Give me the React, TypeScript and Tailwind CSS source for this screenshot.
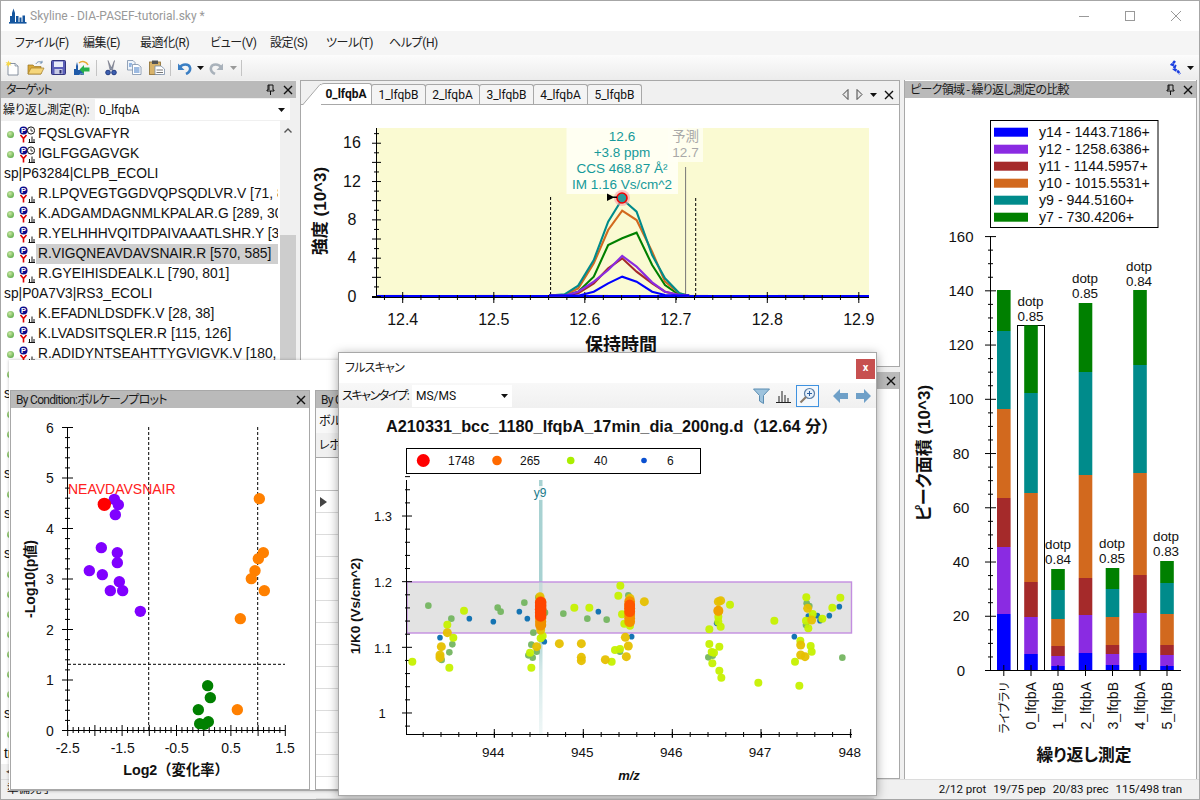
import React from "react";

const UI = "font-['Roboto','Noto_Sans_CJK_JP',sans-serif] [font-feature-settings:'palt']";
const AR = "font-['Liberation_Sans','Noto_Sans_CJK_JP',sans-serif]";
const NOPALT = "[font-feature-settings:normal]";

const range = (a: number, b: number, s: number) => {
  const r: number[] = [];
  for (let v = a; v <= b + 1e-6; v += s) r.push(v);
  return r;
};

function CloseX({ className = "" }: { className?: string }) {
  return (
    <svg width="10" height="10" viewBox="0 0 10 10" className={className}>
      <path d="M1 1L9 9M9 1L1 9" stroke="#111" strokeWidth="1.4" />
    </svg>
  );
}
function Pin() {
  return (
    <svg width="9" height="11" viewBox="0 0 9 11">
      <path d="M2 1H7V6H8V7H1V6H2ZM3 1V6M4.5 7V11" stroke="#111" fill="none" strokeWidth="1" />
    </svg>
  );
}
function PanelTitle({ text, pin, className = "tracking-[-0.7px]" }: { text: string; pin?: boolean; className?: string }) {
  return (
    <div className={`h-[17px] shrink-0 bg-[#bababa] flex items-center pl-[5px] pr-[3px] text-[12px] text-[#1a1a1a] ${className}`}>
      <span className="flex-1 whitespace-nowrap overflow-hidden">{text}</span>
      {pin && <span className="mr-[8px] flex"><Pin /></span>}
      <CloseX />
    </div>
  );
}

const tb = {
  New: (
    <svg width="14" height="16" viewBox="0 0 14 16">
      <path d="M3 3.5H10L13 6V15H3Z" fill="#fff" stroke="#6d7a8c" strokeWidth="0.8" />
      <path d="M10 3.5V6H13" fill="#dfe6ee" stroke="#6d7a8c" strokeWidth="0.6" />
      <path d="M3.5 0.5L4.3 2.6L6.5 2L5 3.8L6.5 5.6L4.3 5L3.5 7L2.6 5L0.5 5.6L2 3.8L0.5 2L2.6 2.6Z" fill="#f6d84a" />
    </svg>
  ),
  Open: (
    <svg width="18" height="16" viewBox="0 0 18 16">
      <path d="M1 5H6L7.5 6.5H14V14H1Z" fill="#d9a93a" stroke="#9a7420" strokeWidth="0.7" />
      <path d="M1 14L4 8H17L14 14Z" fill="#f5d67c" stroke="#a47d26" strokeWidth="0.7" />
      <path d="M9 4C10 1.5 13 1 15 2.5M15 0.8V3H12.8" fill="none" stroke="#6d8db0" strokeWidth="1" />
    </svg>
  ),
  Save: (
    <svg width="15" height="15" viewBox="0 0 15 15">
      <rect x="0.5" y="0.5" width="14" height="14" rx="1" fill="#5b5fb8" stroke="#33357c" />
      <rect x="3" y="1.5" width="9" height="5.5" fill="#e8ecf8" />
      <rect x="3.5" y="9" width="8" height="5" fill="#c8cbe6" />
      <rect x="8.5" y="10" width="2" height="3.5" fill="#2e3070" />
    </svg>
  ),
  Import: (
    <svg width="17" height="16" viewBox="0 0 17 16">
      <path d="M1 15V9H3V6L4 2L5 6V10H8L11 12V15Z" fill="#1f5aa8" />
      <path d="M6 3C9 0.5 13.5 1.5 15 5" fill="none" stroke="#e7a936" strokeWidth="1.5" />
      <path d="M7 15V14H11" stroke="#8ab4e0" />
      <path d="M16.5 7.5H11V5L6.5 9.5L11 14V11.5H16.5Z" fill="#27b04a" />
    </svg>
  ),
  Cut: (
    <svg width="12" height="16" viewBox="0 0 12 16">
      <path d="M3 0.5L6.5 8L9.5 0.5L7.5 10H5Z" fill="#8a94a8" stroke="#667" strokeWidth="0.5" />
      <circle cx="3" cy="12.5" r="2.3" fill="#3c5fb0" stroke="#223a80" />
      <circle cx="9" cy="12.5" r="2.3" fill="#3c5fb0" stroke="#223a80" />
    </svg>
  ),
  Copy: (
    <svg width="15" height="15" viewBox="0 0 15 15">
      <path d="M0.5 0.5H6L8 2.5V10H0.5Z" fill="#eef4fb" stroke="#7a8ea8" strokeWidth="0.8" />
      <path d="M5.5 4.5H11L14 7V14.5H5.5Z" fill="#fff" stroke="#7a8ea8" strokeWidth="0.8" />
      <path d="M7 8H12.5M7 10H12.5M7 12H12.5M2 4H5M2 6H4.5" stroke="#3a76c4" strokeWidth="1" />
    </svg>
  ),
  Paste: (
    <svg width="16" height="15" viewBox="0 0 16 15">
      <rect x="0.5" y="2" width="11" height="12.5" fill="#d9b36a" stroke="#8b6c2d" strokeWidth="0.8" />
      <rect x="3" y="0.5" width="6" height="3.5" fill="#555" />
      <path d="M6 6H12L15.5 9V14.5H6Z" fill="#fff" stroke="#7a8ea8" strokeWidth="0.8" />
      <path d="M7.5 10H14M7.5 12.5H14" stroke="#777" />
    </svg>
  ),
  Undo: (c: string) => (
    <svg width="14" height="14" viewBox="0 0 14 14">
      <path d="M2 6.5C4 2.5 11 2.5 12 6.5C12.6 9 11 11.5 8 13" fill="none" stroke={c} strokeWidth="2.6" />
      <path d="M0 2.5V9H6.5Z" fill={c} />
    </svg>
  ),
  Redo: (c: string) => (
    <svg width="14" height="14" viewBox="0 0 14 14">
      <path d="M12 6.5C10 2.5 3 2.5 2 6.5C1.4 9 3 11.5 6 13" fill="none" stroke={c} strokeWidth="2.6" />
      <path d="M14 2.5V9H7.5Z" fill={c} />
    </svg>
  ),
};

const Caret = ({ color = "#111" }: { color?: string }) => (
  <svg width="7" height="4" viewBox="0 0 7 4"><path d="M0 0H7L3.5 4Z" fill={color} /></svg>
);
const Sep = () => <div className="w-px h-[16px] bg-[#c4c4c4]" />;

function TreeIcon({ lib }: { lib?: boolean }) {
  return (
    <svg width="16" height="17" viewBox="0 0 16 17" className="shrink-0">
      <circle cx="4.5" cy="4.5" r="4" fill="#0c0c8c" />
      <text x="4.5" y="7.3" textAnchor="middle" fontSize="7.5" fontWeight="700" fill="#fff" className={AR}>P</text>
      {lib && (
        <>
          <circle cx="12" cy="4.5" r="3.6" fill="#fff" stroke="#111" strokeWidth="1" />
          <path d="M12 2.5V5H14" stroke="#111" strokeWidth="0.8" fill="none" />
        </>
      )}
      <path d="M1.5 9L4.5 12.5L7.5 9M4.5 12.5V16.5" stroke="#e00000" strokeWidth="1.6" fill="none" />
      <path d="M9.5 16.5H16M10.5 16V13M13 16V10.5M15 16V13" stroke="#111" strokeWidth="1" fill="none" />
    </svg>
  );
}

type Row = { t: string; p?: boolean; lib?: boolean; sel?: boolean };
const rows: Row[] = [
  { t: "FQSLGVAFYR", p: true, lib: true },
  { t: "IGLFGGAGVGK", p: true, lib: true },
  { t: "sp|P63284|CLPB_ECOLI" },
  { t: "R.LPQVEGTGGDVQPSQDLVR.V [71, 89]", p: true },
  { t: "K.ADGAMDAGNMLKPALAR.G [289, 305]", p: true },
  { t: "R.YELHHHVQITDPAIVAAATLSHR.Y [346, 368]", p: true },
  { t: "R.VIGQNEAVDAVSNAIR.R [570, 585]", p: true, sel: true },
  { t: "R.GYEIHISDEALK.L [790, 801]", p: true },
  { t: "sp|P0A7V3|RS3_ECOLI" },
  { t: "K.EFADNLDSDFK.V [28, 38]", p: true },
  { t: "K.LVADSITSQLER.R [115, 126]", p: true },
  { t: "R.ADIDYNTSEAHTTYGVIGVK.V [180, 199]", p: true },
  { t: "R.IGGLSLK.V [210, 216]", p: true },
  { t: "sp|P0AE08|AHPC_ECOLI" },
  { t: "R.QITVNDLPVGR.S", p: true },
  { t: "K.AFLDALK.Q", p: true },
  { t: "R.GEVLLAK.A", p: true },
  { t: "sp|P0A6F5|CH60_ECOLI" },
  { t: "K.AAVEEGVVAGGGVALIR.V", p: true },
  { t: "sp|P0A9P0|DLDH_ECOLI" },
  { t: "K.VINQILDR.G", p: true },
  { t: "sp|P0CE47|EFTU1_ECOLI" },
  { t: "R.TTLTAAITTVLAK.T", p: true },
  { t: "K.GYRPQFYFR.T", p: true },
  { t: "R.AIDKPFLLPIEDVFSISGR.G", p: true },
  { t: "K.ALEGDAEWEAK.I", p: true },
  { t: "R.GITINTSHVEYDTPTR.H", p: true },
  { t: "K.DEGGLIAR.E", p: true },
  { t: "K.TTLTAAITK.A", p: true },
  { t: "sp|P0A6Y8|DNAK_ECOLI" },
  { t: "R.IINEPTAAALAYGLDK.G", p: true },
  { t: "tr|Q8X|TEST" },
];

function Chromatogram() {
  const cx = (z: number) => 300 + z / 2.57;
  const cy = (z: number) => 75 + z / 3;
  const xs = [640, 680, 715, 755, 792, 828, 865, 905, 938, 975, 1000];
  const series: [string, number[]][] = [
    ["#008000", [662, 661, 650, 605, 510, 490, 473, 570, 630, 660, 662]],
    ["#d2691e", [662, 660, 640, 565, 465, 407, 435, 530, 620, 655, 662]],
    ["#008b8b", [662, 658, 632, 555, 440, 372, 410, 540, 610, 655, 662]],
    ["#a52a2a", [662, 662, 655, 625, 580, 550, 590, 625, 650, 660, 662]],
    ["#8a2be2", [662, 662, 650, 620, 585, 543, 575, 622, 650, 660, 662]],
    ["#0000ff", [662, 662, 662, 650, 625, 605, 620, 650, 660, 662, 662]],
  ];
  const xMaj = [402.7, 493.8, 584.8, 675.9, 767.3, 858.8];
  const xLab = ["12.4", "12.5", "12.6", "12.7", "12.8", "12.9"];
  return (
    <svg viewBox="301 105 598 262" width="598" height="262" className={`block ${AR}`}>
      <rect x="377" y="128" width="492" height="168" fill="#fafad2" />
      <polyline points="378,295.4 869,295.4" stroke="#a52a2a" strokeWidth="1" opacity="0.5" strokeDasharray="30 70" />
      <line x1="377" y1="296" x2="869" y2="296" stroke="#0000ff" strokeWidth="2.2" />
      <line x1="372" y1="297.5" x2="869" y2="297.5" stroke="#000" strokeWidth="1" />
      <line x1="376.5" y1="128" x2="376.5" y2="297" stroke="#000" strokeWidth="1" />
      {range(0, 17, 1).map((v) => {
        const y = 296.5 - v * 9.58;
        const major = v % 2 === 0;
        return <line key={v} x1={major ? 372 : 374} x2={major ? 381 : 379} y1={y} y2={y} stroke="#000" strokeWidth="1" />;
      })}
      {[0, 4, 8, 12, 16].map((v) => (
        <text key={v} x="352" y={296 - v * 9.58 + 5.5} textAnchor="middle" fontSize="16" fill="#111">{v}</text>
      ))}
      {range(-1, 26, 1).map((i) => {
        const x = 402.7 + i * 18.24;
        if (x < 377 || x > 869) return null;
        return <line key={i} x1={x} x2={x} y1="295" y2="300" stroke="#000" strokeWidth="1" />;
      })}
      {xMaj.map((x, i) => (
        <g key={i}>
          <line x1={x} x2={x} y1="292" y2="303" stroke="#000" strokeWidth="1" />
          <text x={x} y="325" textAnchor="middle" fontSize="16" fill="#111">{xLab[i]}</text>
        </g>
      ))}
      <line x1="550.6" x2="550.6" y1="197" y2="296" stroke="#000" strokeDasharray="3 2" />
      <line x1="695.7" x2="695.7" y1="198" y2="296" stroke="#000" strokeDasharray="3 2" />
      <line x1="685.6" x2="685.6" y1="167" y2="296" stroke="#777" />
      {series.map(([c, ys]) => (
        <polyline key={c} points={xs.map((z, i) => `${cx(z)},${cy(ys[i])}`).join(" ")} fill="none" stroke={c} strokeWidth="2.1" />
      ))}
      <rect x="566.5" y="128" width="111.5" height="66" fill="#fffff4" opacity="0.92" />
      <rect x="668" y="128" width="35" height="34" fill="#fffff4" opacity="0.8" />
      <g fontSize="13.5" fill="#169a9a" textAnchor="middle">
        <text x="622" y="141">12.6</text>
        <text x="622" y="157">+3.8 ppm</text>
        <text x="622" y="173">CCS 468.87 Å²</text>
        <text x="622" y="189">IM 1.16 Vs/cm^2</text>
      </g>
      <g fontSize="13.5" fill="#a8a8a8" textAnchor="middle">
        <text x="685.5" y="141">予測</text>
        <text x="685.5" y="157">12.7</text>
      </g>
      <circle cx="622" cy="198" r="8" fill="#f4a0a8" opacity="0.6" />
      <circle cx="622" cy="198" r="5" fill="#2c9a9a" stroke="#f00000" strokeWidth="1.6" />
      <path d="M607 193.5L613 196.5H617V198H613L607 201Z" fill="#000" />
      <text transform="translate(326 211) rotate(-90)" textAnchor="middle" fontSize="17" fontWeight="700" fill="#111">強度 (10^3)</text>
      <text x="621" y="351" textAnchor="middle" fontSize="18" fontWeight="700" fill="#111">保持時間</text>
    </svg>
  );
}

function Volcano() {
  const px = (z: number) => z / 3;
  const py = (z: number) => 380 + z / 3;
  const purple = [[340, 358], [352, 374], [343, 404], [301, 503], [349, 518], [349, 548], [265, 572], [304, 584], [355, 605], [328, 632], [365, 632], [418, 694]];
  const orange = [[775, 356], [787, 518], [772, 536], [762, 572], [751, 596], [790, 632], [718, 716], [709, 989]];
  const green = [[620, 917], [628, 953], [592, 989], [596, 1031], [622, 1025], [610, 1033]];
  const xLab: [number, string][] = [[66.7, "-2.5"], [121.7, "-1.5"], [175.7, "-0.5"], [230, "0.5"], [284, "1.5"]];
  return (
    <svg viewBox="10 408 298 381" width="298" height="381" className={`block ${AR}`}>
      <line x1="66.5" y1="427" x2="66.5" y2="730" stroke="#000" />
      <line x1="66" y1="730.5" x2="284" y2="730.5" stroke="#000" />
      {range(0, 30, 1).map((i) => {
        const y = 730.5 - i * 10.1;
        const maj = i % 5 === 0;
        return <line key={i} x1={maj ? 61 : 64} x2={maj ? 72 : 69} y1={y} y2={y} stroke="#000" />;
      })}
      {range(0, 6, 1).map((v) => (
        <text key={v} x="49" y={735.5 - v * 50.5} textAnchor="middle" fontSize="14" fill="#111">{v}</text>
      ))}
      {range(0, 40, 1).map((i) => {
        const x = 66.7 + i * 5.44;
        const maj = i % 5 === 0;
        return <line key={i} x1={x} x2={x} y1={maj ? 725 : 727} y2={maj ? 736 : 733} stroke="#000" />;
      })}
      {xLab.map(([x, s]) => (
        <text key={s} x={x} y="753" textAnchor="middle" fontSize="14" fill="#111">{s}</text>
      ))}
      <line x1="147.7" x2="147.7" y1="427" y2="730" stroke="#000" strokeDasharray="3 2" />
      <line x1="256.7" x2="256.7" y1="427" y2="730" stroke="#000" strokeDasharray="3 2" />
      <line x1="67" x2="284" y1="664.3" y2="664.3" stroke="#000" strokeDasharray="3 2" />
      {purple.map(([x, y], i) => <circle key={i} cx={px(x)} cy={py(y)} r="5.7" fill="#8000ff" />)}
      {orange.map(([x, y], i) => <circle key={i} cx={px(x)} cy={py(y)} r="5.7" fill="#ff8000" />)}
      {green.map(([x, y], i) => <circle key={i} cx={px(x)} cy={py(y)} r="5.7" fill="#008000" />)}
      <circle cx={px(310)} cy={py(373)} r="6.7" fill="#ff0000" />
      <text x="67" y="494" fontSize="14" fill="#ff2020">NEAVDAVSNAIR</text>
      <text transform="translate(34 579) rotate(-90)" textAnchor="middle" fontSize="14" fontWeight="700" fill="#111">-Log10(p値)</text>
      <text x="175" y="775" textAnchor="middle" fontSize="14.3" fontWeight="700" fill="#111" className={NOPALT}>Log2（変化率）</text>
    </svg>
  );
}

const G = "#74b560", B = "#0a6eb0", L = "#c6f100", Y = "#e6c000";
const pts: [string, number, number[][]][] = [
  [G, 3.3, [[115, 407], [184, 446], [323, 413], [332, 425], [403, 398], [520, 431], [592, 446], [650, 449], [430, 488], [424, 524], [440, 545], [415, 556], [428, 563], [178, 547], [187, 523], [155, 570], [690, 545], [715, 376], [1357, 563], [968, 557], [955, 562], [445, 382], [465, 428], [1250, 400], [1258, 408], [1248, 465]]],
  [B, 2.8, [[150, 503], [238, 446], [310, 455], [388, 425], [412, 446], [625, 425], [725, 500], [463, 515], [1213, 500], [1318, 437], [1348, 410], [1282, 437], [1290, 452], [980, 460], [1255, 438]]],
  [L, 4, [[67, 575], [222, 422], [172, 464], [190, 503], [178, 593], [553, 413], [598, 413], [691, 347], [685, 377], [696, 433], [703, 461], [720, 467], [424, 593], [420, 548], [458, 498], [452, 505], [675, 540], [690, 537], [665, 575], [1020, 404], [958, 478], [992, 470], [958, 522], [988, 530], [965, 546], [972, 548], [967, 580], [988, 602], [994, 623], [1105, 638], [1153, 452], [1228, 647], [1215, 575], [1231, 512], [1262, 528], [1265, 545], [1249, 382], [1255, 475], [1248, 452], [1297, 446], [1327, 413], [1351, 383], [1268, 432], [985, 455], [985, 440], [720, 460]]],
  [Y, 4.5, [[172, 488], [154, 530], [150, 555], [150, 563], [508, 521], [574, 521], [574, 562], [574, 572], [646, 569], [706, 502], [715, 528], [709, 560], [763, 395], [440, 530], [450, 380], [985, 395], [992, 392], [1245, 560], [1232, 525], [1253, 415], [1265, 450], [452, 480], [720, 385], [985, 425], [1232, 555]]],
];

function FullScan() {
  const px = (z: number) => 390 + z / 3;
  const py = (z: number) => 470 + z / 3;
  const xMaj = [494.3, 583.3, 672.3, 761, 850.7];
  return (
    <svg viewBox="339 408 536 387" width="536" height="387" className={`block ${AR}`}>
      <defs>
        <linearGradient id="band" x1="0" y1="0" x2="0" y2="1">
          <stop offset="0" stopColor="#a8d2d2" />
          <stop offset="0.6" stopColor="#a8d2d2" />
          <stop offset="0.75" stopColor="#d4e9e9" />
          <stop offset="1" stopColor="#f0f7f7" />
        </linearGradient>
      </defs>
      <text x="386" y="432" fontSize="16.3" fontWeight="700" fill="#111" className={NOPALT}>A210331_bcc_1180_lfqbA_17min_dia_200ng.d（12.64 分）</text>
      <rect x="406.5" y="448.5" width="294" height="25" fill="#fff" stroke="#000" />
      <circle cx="423.3" cy="460.5" r="6.5" fill="#ff0000" />
      <circle cx="497" cy="460.5" r="4.8" fill="#ff6a00" />
      <circle cx="570.7" cy="460.5" r="3.8" fill="#aaee00" />
      <circle cx="644" cy="460.5" r="2.8" fill="#0a50d0" />
      <g fontSize="12" fill="#111">
        <text x="448" y="465">1748</text>
        <text x="520" y="465">265</text>
        <text x="594" y="465">40</text>
        <text x="667" y="465">6</text>
      </g>
      <rect x="539" y="480" width="3.5" height="254" fill="url(#band)" />
      <rect x="407" y="582" width="444.5" height="51" fill="#e3e3e3" stroke="#c38ee0" strokeWidth="1.4" />
      <rect x="539" y="582" width="3.5" height="51" fill="#a8d2d2" opacity="0.5" />
      <rect x="533" y="486" width="15" height="14" fill="#fff" opacity="0.8" />
      <text x="540" y="497" textAnchor="middle" fontSize="12" fill="#1a7a8a">y9</text>
      <line x1="406.5" y1="480" x2="406.5" y2="735" stroke="#000" />
      <line x1="406" y1="734.5" x2="852" y2="734.5" stroke="#000" />
      {range(0, 19, 1).map((i) => {
        const y = 726.1 - i * 13.13;
        const maj = (i - 1) % 5 === 0;
        return <line key={i} x1={maj ? 402 : 405} x2={maj ? 412 : 410} y1={y} y2={y} stroke="#000" />;
      })}
      {([[516.5, "1.3"], [582, "1.2"], [648, "1.1"], [713.5, "1"]] as [number, string][]).map(([y, s]) => (
        <text key={s} x={s === "1" ? 382 : 383} y={y + 4.5} textAnchor="middle" fontSize="13" fill="#111">{s}</text>
      ))}
      {range(0, 24, 1).map((i) => {
        const x = 423.2 + i * 17.8;
        return <line key={i} x1={x} x2={x} y1="732" y2="737" stroke="#000" />;
      })}
      {xMaj.map((x, i) => (
        <g key={i}>
          <line x1={x} x2={x} y1="729" y2="738" stroke="#000" />
          <text x={x - 1} y="757" textAnchor="middle" fontSize="13.5" fill="#111">{944 + i}</text>
        </g>
      ))}
      <text x="629" y="780" textAnchor="middle" fontSize="13" fontWeight="700" fontStyle="italic" fill="#111">m/z</text>
      <text transform="translate(360 606) rotate(-90)" textAnchor="middle" fontSize="13.5" fontWeight="700" fill="#111">1/K0 (Vs/cm^2)</text>
      {pts.map(([c, r, list]) =>
        list.map(([x, y], i) => <circle key={c + i} cx={px(x)} cy={py(y)} r={r} fill={c} opacity="0.95" />)
      )}
      {[395, 405, 415, 425, 435, 445, 455, 465].map((y) => (
        <circle key={y} cx={px(452)} cy={py(y)} r="5.6" fill="#f09000" />
      ))}
      {[398, 408, 418, 428, 438].map((y) => (
        <circle key={y} cx={px(452)} cy={py(y)} r="5.8" fill="#ff4500" />
      ))}
      {[395, 405, 415, 425, 435, 445, 455].map((y) => (
        <circle key={y} cx={px(719)} cy={py(y)} r="5.4" fill="#f59000" />
      ))}
      {[405, 415, 425].map((y) => (
        <circle key={y} cx={px(719)} cy={py(y)} r="5.4" fill="#ff5500" />
      ))}
      <circle cx={px(985)} cy={py(422)} r="5" fill="#f0a000" />
    </svg>
  );
}

function AreaChart() {
  const bars: { x: number; s: number[]; top: number }[] = [
    { x: 997, s: [614, 547, 498, 409, 331], top: 290 },
    { x: 1024.2, s: [654, 617, 582, 493, 393], top: 325.3 },
    { x: 1051.2, s: [666, 656, 646, 619, 590], top: 569 },
    { x: 1078.7, s: [653, 615, 578, 475, 372], top: 303 },
    { x: 1105.7, s: [665, 654, 645, 617, 589], top: 568 },
    { x: 1133.2, s: [653, 613, 575, 473, 365], top: 290 },
    { x: 1160.2, s: [666, 655, 645, 614, 583], top: 561 },
  ];
  const cols = ["#0000ff", "#8a2be2", "#a52a2a", "#d2691e", "#008b8b", "#008000"];
  const legend = ["y14 - 1443.7186+", "y12 - 1258.6386+", "y11 - 1144.5957+", "y10 - 1015.5531+", "y9 - 944.5160+", "y7 - 730.4206+"];
  const dotp: [number, number, string][] = [[1030.5, 306, "0.85"], [1058, 549, "0.84"], [1085, 283, "0.85"], [1112, 548, "0.85"], [1139, 271, "0.84"], [1166, 541, "0.83"]];
  const names = ["ライブラリ", "0_lfqbA", "1_lfqbB", "2_lfqbA", "3_lfqbB", "4_lfqbA", "5_lfqbB"];
  return (
    <svg viewBox="905 98 292 680" width="292" height="680" className={`block ${AR}`}>
      <rect x="990.5" y="120.5" width="167.5" height="107" fill="#fff" stroke="#000" />
      {legend.map((t, i) => (
        <g key={t}>
          <rect x="994" y={127.7 + i * 17} width="34" height="9" fill={cols[i]} />
          <text x="1039" y={137 + i * 17} fontSize="14.2" fill="#111">{t}</text>
        </g>
      ))}
      <line x1="990.5" y1="236" x2="990.5" y2="670" stroke="#000" />
      <line x1="985" y1="670.5" x2="1181" y2="670.5" stroke="#000" />
      {range(0, 32, 1).map((i) => {
        const y = 670.5 - i * 13.56;
        const maj = i % 4 === 0;
        return <line key={i} x1={maj ? 985 : 988} x2={maj ? 996 : 993} y1={y} y2={y} stroke="#000" />;
      })}
      {range(0, 160, 20).map((v) => (
        <text key={v} x="961" y={675.5 - v * 2.7125} textAnchor="middle" fontSize="15" fill="#111">{v}</text>
      ))}
      <rect x="1017.5" y="325.5" width="27" height="345" fill="#fff" stroke="#000" />
      {bars.map((b, i) => {
        const ys = [670, ...b.s, b.top];
        return (
          <g key={i}>
            {cols.map((c, k) => (
              <rect key={c} x={b.x} y={ys[k + 1]} width="13.6" height={ys[k] - ys[k + 1]} fill={c} />
            ))}
            <line x1={b.x + 6.8} x2={b.x + 6.8} y1="665" y2="676" stroke="#000" />
            <text transform={`translate(${b.x + 12} 682) rotate(-90)`} textAnchor="end" fontSize={i === 0 ? 12 : 14} fill="#111">{names[i]}</text>
          </g>
        );
      })}
      {dotp.map(([x, y, v], i) => (
        <g key={i} fontSize="13.4" fill="#111" textAnchor="middle">
          <text x={x} y={y}>dotp</text>
          <text x={x} y={y + 14.6}>{v}</text>
        </g>
      ))}
      <text transform="translate(930 453) rotate(-90)" textAnchor="middle" fontSize="17" fontWeight="700" fill="#111">ピーク面積 (10^3)</text>
      <text x="1084" y="761" textAnchor="middle" fontSize="16.8" fontWeight="700" fill="#111">繰り返し測定</text>
    </svg>
  );
}

function Tab({ t, active }: { t: string; active?: boolean }) {
  return (
    <div className={`h-[20px] flex items-center justify-center text-[12px] border border-b-0 border-[#a8a8a8] rounded-t-[3px] -mr-px ${active ? "w-[51px] bg-white font-bold h-[21px] border-l-0" : "w-[55px] bg-[#f4f4f4]"}`}>
      {t}
    </div>
  );
}

const menu: [string, string][] = [
  ["ファイル(F)", "w-[68px]"],
  ["編集(E)", "w-[57px]"],
  ["最適化(R)", "w-[70px]"],
  ["ビュー(V)", "w-[60px]"],
  ["設定(S)", "w-[56px]"],
  ["ツール(T)", "w-[63px]"],
  ["ヘルプ(H)", "w-[60px]"],
];

export default function App() {
  return (
    <div className={`w-[1200px] h-[800px] relative overflow-hidden bg-[#f0f0f0] border border-[#a6a6a6] flex flex-col text-[#111] ${UI}`}>
      {/* Title bar */}
      <div className="h-[30px] shrink-0 bg-white flex items-center">
        <svg width="18" height="16" viewBox="0 0 18 16" className="ml-[8px] mr-[3px]">
          <path d="M1 14V8H3V5L4.5 0.5L6 5V14ZM7 14V8H9.5V14ZM10.5 14V9.5H12.5V14ZM13.5 14V7.5H16V14Z" fill="#14559e" />
          <rect x="0" y="14" width="17.5" height="1.6" fill="#14559e" />
        </svg>
        <span className="text-[12px] text-[#999] flex-1">Skyline - DIA-PASEF-tutorial.sky *</span>
        <div className="w-[10px] h-px bg-[#999] mr-[36px]" />
        <div className="w-[10px] h-[10px] border border-[#999] mr-[36px]" />
        <svg width="10" height="10" viewBox="0 0 10 10" className="mr-[18px]"><path d="M0 0L10 10M10 0L0 10" stroke="#999" strokeWidth="1" /></svg>
      </div>
      {/* Menu */}
      <div className="h-[24px] shrink-0 bg-[#f5f5f5] flex items-center pl-[14px] text-[12px] text-[#222]">
        {menu.map(([m, w]) => (
          <span key={m} className={`${w} whitespace-nowrap tracking-[-0.4px]`}>{m}</span>
        ))}
      </div>
      {/* Toolbar */}
      <div className="h-[25px] shrink-0 bg-gradient-to-b from-[#fcfcfc] to-[#ececec] flex items-center pl-[4px] pr-[5px]">
        <span className="flex w-[22px]">{tb.New}</span>
        <span className="flex w-[24px]">{tb.Open}</span>
        <span className="flex w-[22px]">{tb.Save}</span>
        <span className="flex w-[23px]">{tb.Import}</span>
        <Sep />
        <span className="flex w-[22px] ml-[8px]">{tb.Cut}</span>
        <span className="flex w-[22px]">{tb.Copy}</span>
        <span className="flex w-[21px]">{tb.Paste}</span>
        <Sep />
        <span className="flex ml-[7px] mr-[5px]">{tb.Undo("#3b7fc4")}</span>
        <Caret />
        <span className="flex ml-[5px] mr-[7px]">{tb.Redo("#a9b2bb")}</span>
        <Caret color="#9a9a9a" />
        <span className="w-[4px]" />
        <Sep />
        <span className="flex-1" />
        <svg width="14" height="15" viewBox="0 0 14 15" className="mr-[3px]">
          <path d="M5 1L2 4.5L5 6L4 9L8 11.5L10 14" fill="none" stroke="#1b3fe0" strokeWidth="2.6" strokeDasharray="3 0.7" />
        </svg>
        <Caret />
      </div>
      {/* Main */}
      <div className="flex-1 min-h-0 flex pr-[2px]">
        {/* Left column */}
        <div className="w-[295px] shrink-0 flex flex-col pt-px">
          <PanelTitle text="ターゲット" pin className="tracking-[-1.5px]" />
          <div className="h-[23px] shrink-0 flex items-center pl-[2px] text-[12px]">
            <span className="w-[92px]">繰り返し測定(R):</span>
            <div className="w-[195px] h-[21px] bg-white flex items-center justify-between pl-[4px] pr-[5px]">
              <span>0_lfqbA</span>
              <Caret />
            </div>
          </div>
          <div className="flex-1 min-h-0 flex bg-white">
            <div className="flex-1 min-w-0 overflow-hidden pt-[3px]">
              {rows.map((r, i) => (
                <div key={i} className={`h-[20px] flex items-center whitespace-nowrap text-[13.8px] ${AR}`}>
                  {r.p ? (
                    <>
                      <span className="w-[7px] h-[7px] rounded-full bg-[radial-gradient(circle_at_40%_35%,#cdeaa6,#3f9a2f)] ml-[5.5px] mr-[5.5px] shrink-0" />
                      <TreeIcon lib={r.lib} />
                      <span className={`ml-[1px] pl-[2px] h-[20px] leading-[20px] w-[242px] overflow-hidden ${r.sel ? "bg-[#cfcfcf]" : ""}`}>{r.t}</span>
                    </>
                  ) : (
                    <span className="pl-[3px]">{r.t}</span>
                  )}
                </div>
              ))}
            </div>
            <div className="w-[16px] shrink-0 bg-[#f0f0f0] flex flex-col">
              <div className="h-[18px] flex items-center justify-center">
                <svg width="8" height="5" viewBox="0 0 8 5"><path d="M0.5 4.5L4 1L7.5 4.5" fill="none" stroke="#555" strokeWidth="1.4" /></svg>
              </div>
              <div className="h-[96px]" />
              <div className="flex-1 bg-[#cdcdcd]" />
            </div>
          </div>
          <div className="h-[15px] shrink-0 bg-[#f0f0f0] pl-[5px] flex items-center text-[9px] text-[#555]">◂</div>
        </div>
        {/* Middle column */}
        <div className="w-[600px] shrink-0 ml-[4px] flex flex-col">
          <div className="h-[287px] shrink-0 border border-[#a8a8a8] flex flex-col bg-white">
            <div className="h-[24px] shrink-0 bg-[#f0f0f0] border-b border-[#a8a8a8] flex items-end relative">
              <svg width="18" height="21" viewBox="0 0 18 21" className="-mb-px ml-[2px] shrink-0">
                <path d="M0 21L17 0H18V21Z" fill="#fff" />
                <path d="M0 20.5L17 0.5H18" fill="none" stroke="#a8a8a8" />
              </svg>
              <Tab t="0_lfqbA" active />
              <Tab t="1_lfqbB" />
              <Tab t="2_lfqbA" />
              <Tab t="3_lfqbB" />
              <Tab t="4_lfqbA" />
              <Tab t="5_lfqbB" />
              <span className="flex-1" />
              <div className="flex items-center gap-[7px] mb-[4px] mr-[5px]">
                <svg width="7" height="11" viewBox="0 0 7 11"><path d="M6 0.5L1 5.5L6 10.5Z" fill="#e8e8e8" stroke="#444" /></svg>
                <svg width="7" height="11" viewBox="0 0 7 11"><path d="M1 0.5L6 5.5L1 10.5Z" fill="#e8e8e8" stroke="#444" /></svg>
                <Caret />
                <CloseX />
              </div>
            </div>
            <div className="flex-1 min-h-0 overflow-hidden"><Chromatogram /></div>
          </div>
          <div className="h-[5px] shrink-0" />
          <div className="flex-1 min-h-0 border border-[#a8a8a8] border-t-0 bg-white flex flex-col">
            <PanelTitle text="By Condition:ピーク領域" />
          </div>
        </div>
        {/* Right column */}
        <div className="flex-1 min-w-0 ml-[4px] flex flex-col border-l border-r border-[#a8a8a8] bg-white">
          <PanelTitle text="ピーク領域 - 繰り返し測定の比較" pin className="mt-px tracking-[-0.7px]" />
          <div className="flex-1 min-h-0 overflow-hidden"><AreaChart /></div>
        </div>
      </div>
      {/* Status bar */}
      <div className="h-[20px] shrink-0 border-t border-[#dcdcdc] bg-[#f0f0f0] flex items-center justify-end gap-[7px] pr-[17px] text-[11.5px] relative">
        <span className="absolute left-[6px]">準備完了</span>
        <span>2/12 prot</span>
        <span>19/75 pep</span>
        <span>20/83 prec</span>
        <span>115/498 tran</span>
      </div>

      {/* Floating docked form */}
      <div className="absolute left-[8px] top-[359px] w-[866px] h-[431px] bg-white border-b border-[#a8a8a8] flex pt-[30px] shadow-[0_0_3px_rgba(0,0,0,0.25)]">
        <div className="w-[300px] shrink-0 border border-[#a8a8a8] bg-white flex flex-col ml-px">
          <PanelTitle text="By Condition:ボルケーノプロット" />
          <div className="flex-1 min-h-0 overflow-hidden"><Volcano /></div>
        </div>
        <div className="flex-1 min-w-0 ml-[5px] border border-[#a8a8a8] bg-white flex flex-col">
          <PanelTitle text="By Condition:結果グリッド" />
          <div className="h-[25px] shrink-0 flex items-center pl-[3px] text-[12px] bg-[#f8f8f8]">ボルケーノ</div>
          <div className="h-[25px] shrink-0 flex items-center pl-[3px] text-[12px] bg-[#f0f0f0] border-b border-[#a8a8a8]">レポート</div>
          <div className="flex-1 min-h-0 flex flex-col">
            <div className="h-[33px] shrink-0 border-b border-[#c0c0c0]" />
            {range(0, 13, 1).map((i) => (
              <div key={i} className="h-[22px] shrink-0 border-b border-[#dcdcdc] flex items-center pl-[4px]">
                {i === 0 && <svg width="7" height="10" viewBox="0 0 7 10"><path d="M0 0L7 5L0 10Z" fill="#444" /></svg>}
              </div>
            ))}
          </div>
        </div>
      </div>

      {/* Full scan window */}
      <div className="absolute left-[337px] top-[351px] w-[539px] h-[444px] bg-white flex flex-col border border-[#a8a8a8] shadow-[0_2px_10px_rgba(0,0,0,0.35)]">
        <div className="h-[30px] shrink-0 flex items-center pl-[6px] text-[12px] text-[#222] relative">
          <span className="flex-1 tracking-[-0.8px]">フルスキャン</span>
          <div className="w-[19px] h-[20px] bg-[#c75050] text-white text-[11px] font-bold flex items-center justify-center mr-[1px] mt-[1px]">x</div>
        </div>
        <div className="h-[25px] shrink-0 bg-gradient-to-b from-[#f8f8f8] to-[#f0f0f0] flex items-center pl-[3px] text-[12px]">
          <span className="w-[70px] whitespace-nowrap tracking-[-1.4px]">スキャンタイプ:</span>
          <div className="w-[100px] h-[22px] bg-white flex items-center justify-between pl-[4px] pr-[4px]">
            <span>MS/MS</span>
            <Caret />
          </div>
          <span className="flex-1" />
          <svg width="17" height="16" viewBox="0 0 17 16" className="mr-[6px]">
            <path d="M0.5 1H16.5L10.5 7.5V15.5L6.5 13V7.5Z" fill="#9ec3dd" stroke="#5b8db2" strokeWidth="1" />
          </svg>
          <svg width="15" height="14" viewBox="0 0 15 14" className="mr-[5px]">
            <path d="M0 13.5H15M3 13V7M6 13V2M9 13V6M12 13V9" stroke="#222" strokeWidth="1" fill="none" />
          </svg>
          <div className="w-[23px] h-[22px] border border-[#3f92e0] bg-[#f4f8fc] flex items-center justify-center mr-[14px]">
            <svg width="17" height="17" viewBox="0 0 17 17">
              <circle cx="10.5" cy="6.5" r="5" fill="#e6f0fa" stroke="#5b7fa8" strokeWidth="1.2" />
              <path d="M8 6.5H13M10.5 4V9" stroke="#2c5fa0" strokeWidth="1" />
              <path d="M7 10L1.5 15.5" stroke="#8a7a6a" strokeWidth="2.2" />
            </svg>
          </div>
          <svg width="15" height="14" viewBox="0 0 15 14" className="mr-[8px]"><path d="M0 7L7 0V4H15V10H7V14Z" fill="#6fa0c8" /></svg>
          <svg width="15" height="14" viewBox="0 0 15 14" className="mr-[5px]"><path d="M15 7L8 0V4H0V10H8V14Z" fill="#6fa0c8" /></svg>
        </div>
        <div className="flex-1 min-h-0 overflow-hidden"><FullScan /></div>
      </div>
    </div>
  );
}
